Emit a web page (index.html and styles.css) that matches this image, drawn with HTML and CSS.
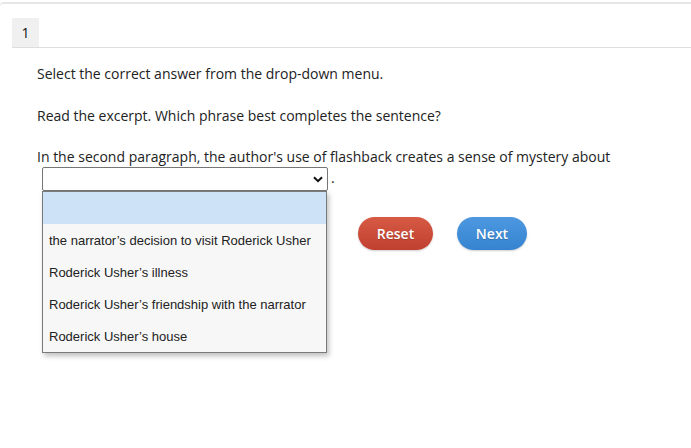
FILE: index.html
```html
<!DOCTYPE html>
<html>
<head>
<meta charset="utf-8">
<link rel="stylesheet" href="styles.css">
</head>
<body>
<div class="frame">
  <div class="tabs"><div class="tab">1</div></div>
  <div class="content">
    <p class="line l1">Select the correct answer from the drop-down menu.</p>
    <p class="line l2">Read the excerpt. Which phrase best completes the sentence?</p>
    <p class="line l3">In the second paragraph, the author's use of flashback creates a sense of mystery about</p>
    <div class="selrow">
      <div class="select">
        <svg class="chev" width="10" height="7" viewBox="0 0 10 7"><path d="M1 1.2 L5 5.2 L9 1.2" fill="none" stroke="#111" stroke-width="2"/></svg>
        <div class="menu">
          <div class="opt hl"></div>
          <div class="opt">the narrator’s decision to visit Roderick Usher</div>
          <div class="opt">Roderick Usher’s illness</div>
          <div class="opt">Roderick Usher’s friendship with the narrator</div>
          <div class="opt">Roderick Usher’s house</div>
        </div>
      </div>
      <span class="dot">.</span>
    </div>
    <div class="buttons">
      <button class="btn reset">Reset</button>
      <button class="btn next">Next</button>
    </div>
  </div>
</div>
</body>
</html>
```
FILE: styles.css
```css
html, body { margin: 0; padding: 0; background: #fff; }
body { font-family: "Open Sans", sans-serif; color: #222; width: 691px; height: 448px; overflow: hidden; }
.frame { margin-top: 2px; border-top: 2px solid #e6e6e6; border-radius: 4px 0 0 0; }
.tabs { margin: 14px 0 0 12px; border-bottom: 1px solid #dedede; display: flex; }
.tab { width: 27px; height: 29px; background: #f0f0f0; font-size: 14px; line-height: 29px; text-align: center; color: #111; }
.content { padding-left: 37px; }
.line { margin: 0; font-size: 14px; line-height: 20px; }
.l1 { margin-top: 16px; }
.l2 { margin-top: 22px; }
.l3 { margin-top: 21px; }
.selrow { display: flex; align-items: flex-end; margin-left: 5px; margin-top: 0px; }
.select { position: relative; width: 284px; height: 22px; border: 1px solid #767676; border-radius: 2px; background: #fff; }
.chev { position: absolute; right: 4px; top: 8px; }
.dot { font-size: 14px; line-height: 20px; margin-left: 3px; margin-bottom: 3px; }
.menu { position: absolute; left: -1px; top: 23px; width: 283px; border: 1px solid #7a7a7a; background: #f7f7f7; box-shadow: 2px 3px 5px rgba(0,0,0,0.25); z-index: 2; }
.opt { height: 32px; line-height: 34px; padding-left: 6px; font-family: "Liberation Sans", Arial, sans-serif; font-size: 13px; color: #222; white-space: nowrap; }
.opt.hl { background: #cde1f7; }
.buttons { display: flex; gap: 24px; margin-left: 321px; margin-top: 26px; }
.btn { border: none; height: 33px; border-radius: 17px; color: #fff; font-family: "Open Sans", sans-serif; font-size: 14px; font-weight: 600; padding: 0; text-shadow: 0 1px 1px rgba(0,0,0,0.2); }
.reset { width: 75px; background: linear-gradient(#d65a44, #c0402f); box-shadow: 0 1px 2px rgba(0,0,0,0.2); }
.next { width: 70px; background: linear-gradient(#4d98e0, #3583d0); box-shadow: 0 1px 2px rgba(0,0,0,0.2); }
```
